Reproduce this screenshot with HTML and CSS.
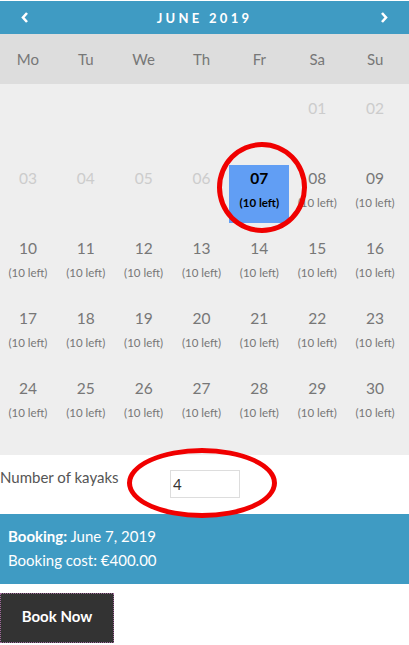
FILE: index.html
```html
<!DOCTYPE html>
<html lang="en">
<head>
    <meta charset="UTF-8">
    <meta name="viewport" content="width=device-width, initial-scale=1.0">
    <title>Kayak Booking</title>
    <link rel="stylesheet" href="styles.css">
</head>
<body>
    <div class="booking">
        <div class="calendar">
            <div class="cal-head">
                <a class="nav" href="#"><svg width="8" height="11" viewBox="0 0 8 11"><polyline points="6,1 2,5.5 6,10" fill="none" stroke="#fff" stroke-width="2.6"/></svg></a>
                <span class="month">June 2019</span>
                <a class="nav" href="#"><svg width="8" height="11" viewBox="0 0 8 11"><polyline points="2,1 6,5.5 2,10" fill="none" stroke="#fff" stroke-width="2.6"/></svg></a>
            </div>
            <div class="weekdays">
                <span>Mo</span><span>Tu</span><span>We</span><span>Th</span><span>Fr</span><span>Sa</span><span>Su</span>
            </div>
            <div class="days">
                <div class="day empty"></div>
                <div class="day empty"></div>
                <div class="day empty"></div>
                <div class="day empty"></div>
                <div class="day empty"></div>
                <div class="day off"><b>01</b></div>
                <div class="day off"><b>02</b></div>

                <div class="day off"><b>03</b></div>
                <div class="day off"><b>04</b></div>
                <div class="day off"><b>05</b></div>
                <div class="day off"><b>06</b></div>
                <div class="day selected"><b>07</b><small>(10 left)</small></div>
                <div class="day"><b>08</b><small>(10 left)</small></div>
                <div class="day"><b>09</b><small>(10 left)</small></div>

                <div class="day"><b>10</b><small>(10 left)</small></div>
                <div class="day"><b>11</b><small>(10 left)</small></div>
                <div class="day"><b>12</b><small>(10 left)</small></div>
                <div class="day"><b>13</b><small>(10 left)</small></div>
                <div class="day"><b>14</b><small>(10 left)</small></div>
                <div class="day"><b>15</b><small>(10 left)</small></div>
                <div class="day"><b>16</b><small>(10 left)</small></div>

                <div class="day"><b>17</b><small>(10 left)</small></div>
                <div class="day"><b>18</b><small>(10 left)</small></div>
                <div class="day"><b>19</b><small>(10 left)</small></div>
                <div class="day"><b>20</b><small>(10 left)</small></div>
                <div class="day"><b>21</b><small>(10 left)</small></div>
                <div class="day"><b>22</b><small>(10 left)</small></div>
                <div class="day"><b>23</b><small>(10 left)</small></div>

                <div class="day"><b>24</b><small>(10 left)</small></div>
                <div class="day"><b>25</b><small>(10 left)</small></div>
                <div class="day"><b>26</b><small>(10 left)</small></div>
                <div class="day"><b>27</b><small>(10 left)</small></div>
                <div class="day"><b>28</b><small>(10 left)</small></div>
                <div class="day"><b>29</b><small>(10 left)</small></div>
                <div class="day"><b>30</b><small>(10 left)</small></div>
            </div>
        </div>

        <div class="qty">
            <label for="kayaks">Number of kayaks</label>
            <input type="text" id="kayaks" value="4">
        </div>

        <div class="summary">
            <p><strong>Booking:</strong> June 7, 2019</p>
            <p>Booking cost: €400.00</p>
        </div>

        <button class="book" type="button">Book Now</button>

        <!-- red annotation marks -->
        <span class="mark mark-date"></span>
        <span class="mark mark-qty"></span>
    </div>
</body>
</html>
```

FILE: styles.css
```css
body {
    margin: 0;
    padding-top: 1px;
    font-family: Lato, "Open Sans", sans-serif;
    background: #fff;
}
.booking {
    position: relative;
}
.cal-head {
    height: 33px;
    background-color: #3f9bc3;
    display: flex;
    align-items: center;
    justify-content: space-between;
    padding: 0 21px;
}
.nav {
    display: flex;
}
.month {
    color: #fff;
    font-size: 13px;
    font-weight: bold;
    letter-spacing: 3.3px;
    text-transform: uppercase;
}
.weekdays {
    height: 50px;
    background-color: #dddddd;
    display: grid;
    grid-template-columns: repeat(7, 1fr);
    align-items: center;
    margin: 0;
    padding: 0 4px 0 0;
}
.weekdays span {
    text-align: center;
    color: #777;
    font-size: 15px;
    margin-left: -2px;
}
.days {
    background-color: #eeeeee;
    display: grid;
    grid-template-columns: repeat(7, 1fr);
    grid-auto-rows: 58px;
    row-gap: 12px;
    padding: 11px 4px 22px 0;
}
.day {
    display: flex;
    flex-direction: column;
    align-items: center;
    margin-left: -2px;
    color: #777;
}
.day b {
    font-weight: normal;
    font-size: 15.5px;
    line-height: 20px;
    margin-top: 3px;
}
.day small {
    font-size: 11.5px;
    line-height: 14px;
    margin-top: 8px;
}
.day.off {
    color: #cccccc;
}
.day.selected {
    background-color: #619ef4;
    color: #000;
}
.day.selected b,
.day.selected small {
    font-weight: bold;
}
.qty {
    display: flex;
    align-items: flex-start;
    padding: 15px 0 16px;
}
.qty label {
    width: 170px;
    color: #555;
    font-size: 15px;
    line-height: 16px;
    margin-top: -1px;
}
.qty input {
    width: 70px;
    height: 28px;
    box-sizing: border-box;
    border: 1px solid #ddd;
    padding: 0 2px;
    font-family: inherit;
    font-size: 15px;
    color: #333;
}
.summary {
    background-color: #3f9bc3;
    color: #fff;
    padding: 10px 8px 12px;
    font-size: 15px;
}
.summary p {
    margin: 0;
    line-height: 24px;
}
.book {
    margin-top: 9px;
    width: 114px;
    height: 50px;
    padding: 0 0 4px;
    background-color: #333;
    color: #fff;
    border: 1px dotted #a06a9a;
    font-family: inherit;
    font-size: 15px;
    font-weight: bold;
    cursor: pointer;
}
.mark {
    position: absolute;
    border: 5px solid #f00000;
    border-radius: 50%;
    box-sizing: border-box;
    pointer-events: none;
}
.mark-date {
    left: 217px;
    top: 141px;
    width: 90px;
    height: 91px;
}
.mark-qty {
    left: 127px;
    top: 447px;
    width: 150px;
    height: 70px;
}
```
